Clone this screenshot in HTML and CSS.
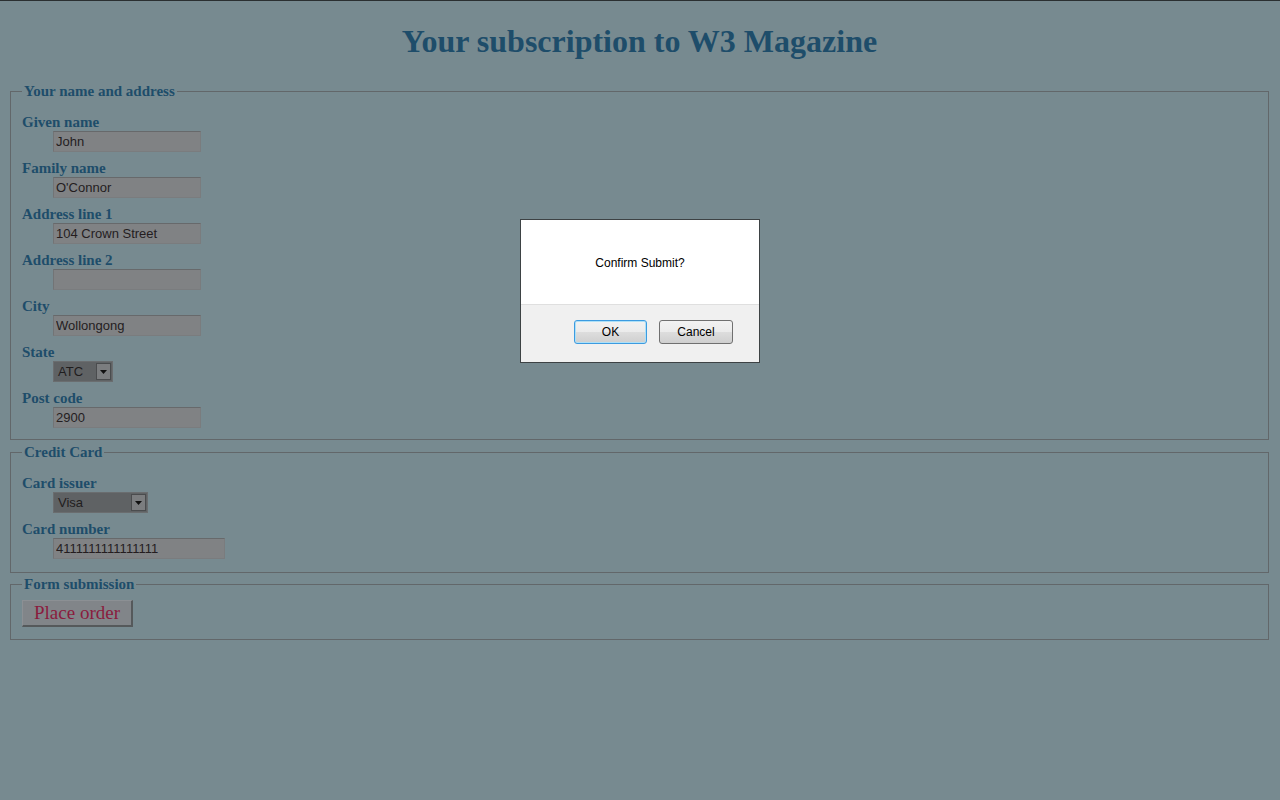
FILE: index.html
```html
<!DOCTYPE html>
<html lang="en">
<head>
<meta charset="utf-8">
<title>Your subscription to W3 Magazine</title>
<link rel="stylesheet" href="styles.css">
</head>
<body>
<div class="page">
  <h1 class="title">Your subscription to W3 Magazine</h1>
  <form class="order-form">
    <fieldset class="group group-address">
      <legend class="group-title">Your name and address</legend>
      <div class="field"><label class="field-label">Given name</label><input class="text-input" type="text" value="John"></div>
      <div class="field"><label class="field-label">Family name</label><input class="text-input" type="text" value="O'Connor"></div>
      <div class="field"><label class="field-label">Address line 1</label><input class="text-input" type="text" value="104 Crown Street"></div>
      <div class="field"><label class="field-label">Address line 2</label><input class="text-input" type="text" value=""></div>
      <div class="field"><label class="field-label">City</label><input class="text-input" type="text" value="Wollongong"></div>
      <div class="field"><label class="field-label">State</label>
        <div class="select select-state"><span class="select-value">ATC</span><span class="select-arrow"><svg width="7" height="4" viewBox="0 0 7 4"><path d="M0 0H7L3.5 4Z" fill="#111"/></svg></span></div>
      </div>
      <div class="field"><label class="field-label">Post code</label><input class="text-input" type="text" value="2900"></div>
    </fieldset>
    <fieldset class="group group-card">
      <legend class="group-title">Credit Card</legend>
      <div class="field"><label class="field-label">Card issuer</label>
        <div class="select select-card"><span class="select-value">Visa</span><span class="select-arrow"><svg width="7" height="4" viewBox="0 0 7 4"><path d="M0 0H7L3.5 4Z" fill="#111"/></svg></span></div>
      </div>
      <div class="field"><label class="field-label">Card number</label><input class="text-input text-input-wide" type="text" value="4111111111111111"></div>
    </fieldset>
    <fieldset class="group group-submit">
      <legend class="group-title">Form submission</legend>
      <button class="place-order" type="button">Place order</button>
    </fieldset>
  </form>
</div>
<div class="dialog" role="dialog">
  <div class="dialog-body">Confirm Submit?</div>
  <div class="dialog-footer">
    <button class="dlg-btn dlg-btn-ok" type="button">OK</button>
    <button class="dlg-btn" type="button">Cancel</button>
  </div>
</div>
</body>
</html>
```
FILE: styles.css
```css
html, body {
  margin: 0;
  padding: 0;
}
body {
  background: #778a90;
  border-top: 1px solid #2a2f31;
  min-height: 799px;
  font-family: "Liberation Serif", "Times New Roman", serif;
  color: #1e4d6a;
}
.page {
  padding: 0 9px 0 8px;
}
.title {
  margin: 22px 0 23px;
  font-size: 32px;
  line-height: 37px;
  font-weight: bold;
  text-align: center;
  color: #1e4d6a;
}
.order-form {
  margin: 0;
}
.group {
  margin: 0 2px;
  border: 1px solid #62676a;
  padding: 14px 11px 11px;
  min-width: 0;
}
.group-card {
  margin-top: 4px;
  padding-bottom: 13px;
}
.group-submit {
  margin-top: 3px;
  padding-top: 7px;
  padding-bottom: 12px;
}
.group-title {
  padding: 0 2px;
  font-size: 15px;
  line-height: 17px;
  font-weight: bold;
  color: #1e4d6a;
}
.field {
  display: flex;
  flex-direction: column;
  align-items: flex-start;
}
.field + .field {
  margin-top: 8px;
}
.field-label {
  display: block;
  font-size: 15px;
  line-height: 17px;
  font-weight: bold;
  color: #1e4d6a;
}
.text-input {
  display: block;
  box-sizing: border-box;
  margin: 0 0 0 31px;
  width: 148px;
  height: 21px;
  padding: 0 2px;
  border: 1px solid #7a7c7e;
  border-top-color: #67696b;
  border-left-color: #727476;
  background: #808284;
  font-family: "Liberation Sans", Arial, sans-serif;
  font-size: 13px;
  color: #241d1f;
  outline: none;
}
.text-input-wide {
  width: 172px;
}
.select {
  display: flex;
  align-items: stretch;
  box-sizing: border-box;
  margin-left: 31px;
  height: 21px;
  border: 1px solid #6a6d6f;
  background: #5f6264;
  font-family: "Liberation Sans", Arial, sans-serif;
  font-size: 13px;
  color: #1f1d1e;
}
.select-state {
  width: 60px;
}
.select-card {
  width: 95px;
}
.select-value {
  flex: 1;
  padding-left: 4px;
  line-height: 19px;
}
.select-arrow {
  display: flex;
  align-items: center;
  justify-content: center;
  width: 15px;
  margin: 1px;
  box-sizing: border-box;
  border: 1px solid #4a4c4e;
  background: #7b7d7f;
}
.place-order {
  box-sizing: border-box;
  width: 111px;
  height: 27px;
  padding: 0;
  border: 1px solid #8c9094;
  border-right: 2px solid #55595b;
  border-bottom: 2px solid #55595b;
  background: #818589;
  font-family: "Liberation Serif", "Times New Roman", serif;
  font-size: 19px;
  line-height: 22px;
  color: #8a1c3e;
}
.dialog {
  position: absolute;
  left: 520px;
  top: 219px;
  width: 240px;
  height: 144px;
  box-sizing: border-box;
  border: 1px solid #3d4244;
  background: #ffffff;
  display: flex;
  flex-direction: column;
  font-family: "Liberation Sans", Arial, sans-serif;
  font-size: 12px;
  color: #000;
}
.dialog-body {
  height: 84px;
  display: flex;
  align-items: center;
  justify-content: center;
  padding-top: 2px;
  box-sizing: border-box;
}
.dialog-footer {
  flex: 1;
  background: #f0f0f0;
  border-top: 1px solid #dfdfdf;
  display: flex;
  justify-content: flex-end;
  align-items: flex-start;
  gap: 12px;
  padding: 15px 26px 0 0;
}
.dlg-btn {
  box-sizing: border-box;
  width: 74px;
  height: 24px;
  padding: 0;
  border: 1px solid #707070;
  border-radius: 3px;
  background: linear-gradient(#f2f2f2 0%, #ebebeb 50%, #dddddd 51%, #cfcfcf 100%);
  font-family: "Liberation Sans", Arial, sans-serif;
  font-size: 12px;
  color: #000;
}
.dlg-btn-ok {
  width: 73px;
  border-color: #3c9be0;
  box-shadow: inset 0 0 0 1px #aee0f7;
}
```
